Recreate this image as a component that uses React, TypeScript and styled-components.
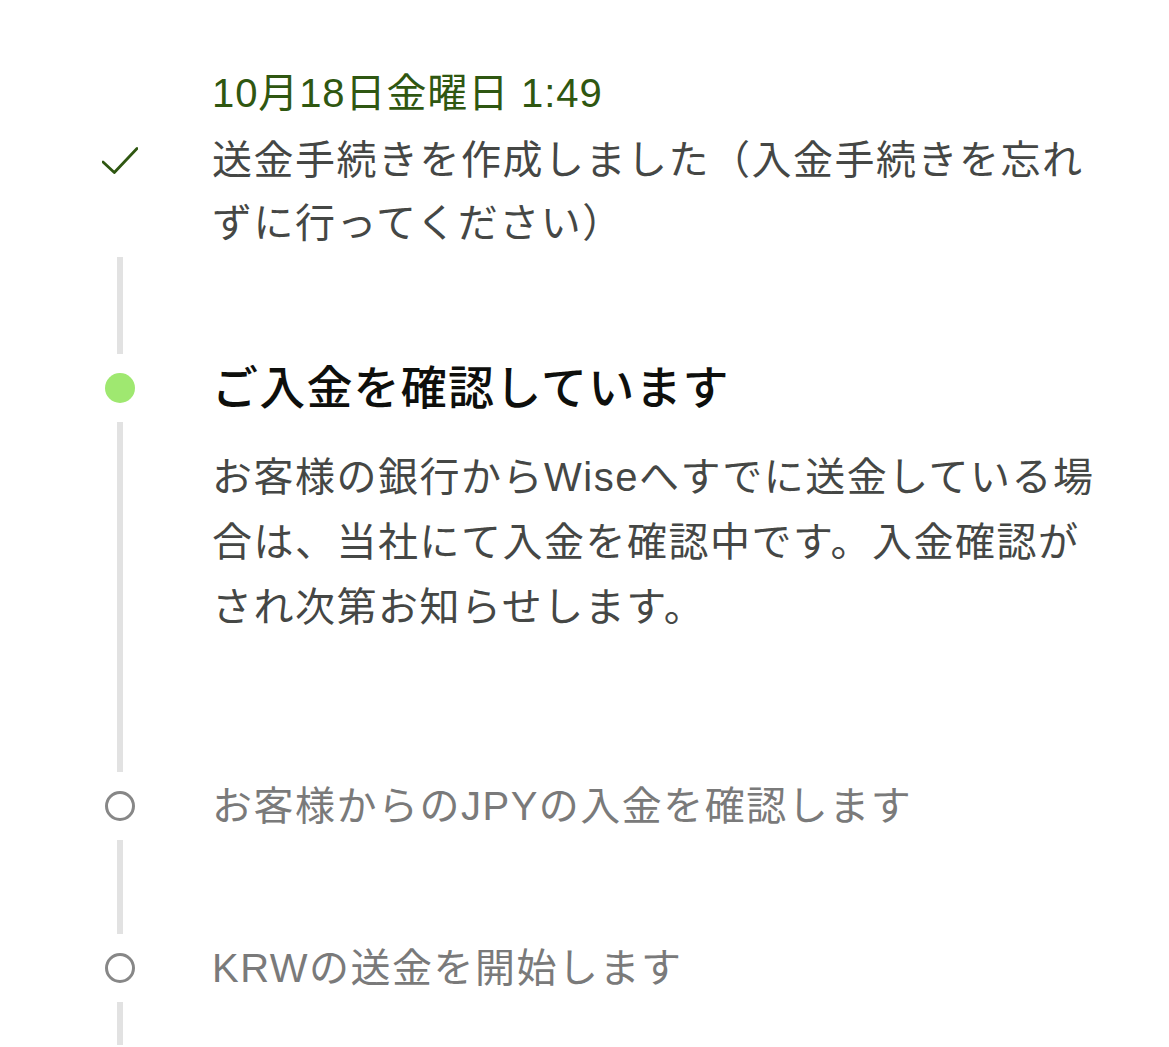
import React from 'react';
import styled, {createGlobalStyle} from "styled-components";

const GlobalStyle = createGlobalStyle`
    html, body {
        margin: 0;
        background: #ffffff;
        overflow: hidden;
    }

    body {
        font-family: "Liberation Sans", "Noto Sans CJK JP", sans-serif;
    }
`

type StepState = 'done' | 'active' | 'pending';

interface StepData {
    state: StepState;
    date?: string;
    title: string[];
    body?: string[];
    tail: number;
}

const steps: StepData[] = [
    {
        state: 'done',
        date: '10月18日金曜日 1:49',
        title: ['送金手続きを作成しました（入金手続きを忘れ', 'ずに行ってください）'],
        tail: 97,
    },
    {
        state: 'active',
        title: ['ご入金を確認しています'],
        body: [
            'お客様の銀行からWiseへすでに送金している場',
            '合は、当社にて入金を確認中です。入金確認が',
            'され次第お知らせします。',
        ],
        tail: 350,
    },
    {
        state: 'pending',
        title: ['お客様からのJPYの入金を確認します'],
        tail: 94,
    },
    {
        state: 'pending',
        title: ['KRWの送金を開始します'],
        tail: 43,
    },
];

const CheckIcon = () => (
    <svg width={"36"} height={'28'} viewBox={'0 0 36 28'} fill="none"
         xmlns="http://www.w3.org/2000/svg">
        <path d="M1 15 L12.3 25.5 L35 1.5" stroke="#2f5711" strokeWidth="2.8"
              strokeLinecap="round" strokeLinejoin="round"/>
    </svg>
);

const Marker = ({state}: { state: StepState }) => (
    <MarkerBox $state={state}>
        {state === 'done' && <CheckIcon/>}
        {state === 'active' && <Dot/>}
        {state === 'pending' && <Ring/>}
    </MarkerBox>
);

export default function App() {
    return (
        <>
            <GlobalStyle/>
            <Timeline>
                {steps.map((step, i) => (
                    <Step key={i}>
                        {step.date && <DateLine>{step.date}</DateLine>}
                        <Marker state={step.state}/>
                        <Title $state={step.state}>
                            {step.title.map((line, j) => (
                                <React.Fragment key={j}>
                                    {j > 0 && <br/>}
                                    {line}
                                </React.Fragment>
                            ))}
                        </Title>
                        <Connector $tail={step.tail}/>
                        {step.body && (
                            <Body>
                                {step.body.map((line, j) => (
                                    <React.Fragment key={j}>
                                        {j > 0 && <br/>}
                                        {line}
                                    </React.Fragment>
                                ))}
                            </Body>
                        )}
                    </Step>
                ))}
            </Timeline>
        </>
    );
}

const Timeline = styled.ol`
    list-style: none;
    margin: 0;
    padding: 61px 0 0;
`

const Step = styled.li`
    display: grid;
    grid-template-columns: 102px 36px 74px 1fr;
    grid-template-rows: auto auto 1fr;
`

const DateLine = styled.div`
    grid-column: 4;
    grid-row: 1;
    color: #2f5711;
    font-size: 40px;
    line-height: 64px;
    letter-spacing: 0.9px;
    margin-bottom: 4px;
    white-space: nowrap;
`

const MarkerBox = styled.div<{ $state: StepState }>`
    grid-column: 2;
    grid-row: 2;
    align-self: start;
    display: flex;
    align-items: center;
    justify-content: center;
    height: ${p => p.$state === 'done' ? 63 : 64}px;
`

const Dot = styled.span`
    width: 30px;
    height: 30px;
    border-radius: 50%;
    background: #9fe870;
`

const Ring = styled.span`
    box-sizing: border-box;
    width: 30px;
    height: 30px;
    border-radius: 50%;
    border: 3px solid #878787;
`

const Title = styled.div<{ $state: StepState }>`
    grid-column: 4;
    grid-row: 2;
    white-space: nowrap;
    ${p => p.$state === 'active' ? `
        color: #0e0f0c;
        font-size: 46px;
        font-weight: 500;
        line-height: 64px;
        letter-spacing: 1.2px;
    ` : `
        color: ${p.$state === 'done' ? '#454745' : '#7a7a7a'};
        font-size: 40px;
        line-height: ${p.$state === 'done' ? 63 : 64}px;
        letter-spacing: 1.5px;
    `}
`

const Connector = styled.div<{ $tail: number }>`
    grid-column: 2;
    grid-row: 3;
    justify-self: center;
    width: 6px;
    min-height: ${p => p.$tail}px;
    margin: 2px 0;
    background: #e2e2e2;
`

const Body = styled.div`
    grid-column: 4;
    grid-row: 3;
    align-self: start;
    padding-top: 25px;
    color: #454745;
    font-size: 40px;
    line-height: 65px;
    letter-spacing: 1.5px;
    white-space: nowrap;
`
